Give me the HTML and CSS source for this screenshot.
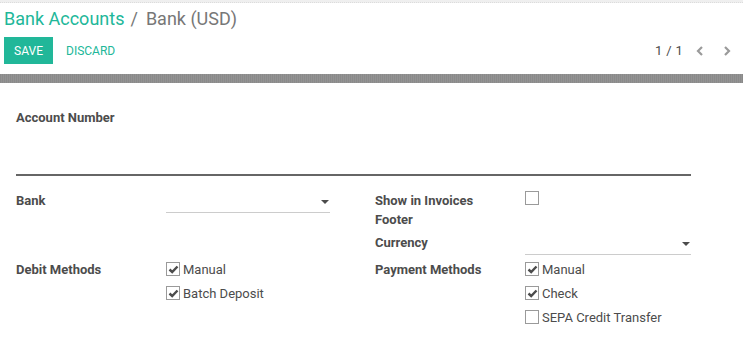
FILE: index.html
```html
<!DOCTYPE html>
<html>
<head>
<meta charset="utf-8">
<link rel="stylesheet" href="styles.css">
</head>
<body>
<div class="topstrip"></div>
<div class="control-panel">
  <div class="breadcrumb"><a class="crumb-link">Bank Accounts</a><span class="sep">/</span><span class="crumb-active">Bank (USD)</span></div>
  <div class="cp-bottom">
    <div class="buttons">
      <button class="btn-save">SAVE</button>
      <button class="btn-discard">DISCARD</button>
    </div>
    <div class="pager">
      <span class="pager-value">1 / 1</span>
      <svg class="chev chev-prev" width="10" height="12" viewBox="0 0 10 12"><path d="M7 2 L3 6 L7 10" fill="none" stroke="#9a9a9a" stroke-width="2.2"/></svg>
      <svg class="chev" width="10" height="12" viewBox="0 0 10 12"><path d="M3 2 L7 6 L3 10" fill="none" stroke="#9a9a9a" stroke-width="2.2"/></svg>
    </div>
  </div>
</div>
<div class="divider"></div>
<div class="sheet">
  <div class="title-label">Account Number</div>
  <div class="title-field"></div>
  <div class="group">
    <div class="label r1">Bank</div>
    <div class="select r1"><span class="caret"></span></div>
    <div class="label r1 c4">Show in Invoices<br>Footer</div>
    <div class="boxcell r1 c5"><span class="cb"></span></div>

    <div class="label r2 c4">Currency</div>
    <div class="select r2 c5"><span class="caret"></span></div>

    <div class="label r3">Debit Methods</div>
    <div class="checks r3">
      <div class="check"><span class="cb on"><svg width="11" height="9" viewBox="0 0 11 9"><path d="M1.5 4.5 L4.2 7 L9.5 1.5" fill="none" stroke="#4c4c4c" stroke-width="2.4"/></svg></span>Manual</div>
      <div class="check"><span class="cb on"><svg width="11" height="9" viewBox="0 0 11 9"><path d="M1.5 4.5 L4.2 7 L9.5 1.5" fill="none" stroke="#4c4c4c" stroke-width="2.4"/></svg></span>Batch Deposit</div>
    </div>
    <div class="label r3 c4">Payment Methods</div>
    <div class="checks r3 c5">
      <div class="check"><span class="cb on"><svg width="11" height="9" viewBox="0 0 11 9"><path d="M1.5 4.5 L4.2 7 L9.5 1.5" fill="none" stroke="#4c4c4c" stroke-width="2.4"/></svg></span>Manual</div>
      <div class="check"><span class="cb on"><svg width="11" height="9" viewBox="0 0 11 9"><path d="M1.5 4.5 L4.2 7 L9.5 1.5" fill="none" stroke="#4c4c4c" stroke-width="2.4"/></svg></span>Check</div>
      <div class="check"><span class="cb"></span>SEPA Credit Transfer</div>
    </div>
  </div>
</div>
</body>
</html>
```
FILE: styles.css
```css
* { box-sizing: border-box; }
body {
  margin: 0;
  font-family: Roboto, "Noto Sans", sans-serif;
  font-size: 13px;
  color: #4c4c4c;
  background: #fff;
  width: 743px;
  height: 358px;
  overflow: hidden;
}
.topstrip {
  height: 3px;
  background: #efefef;
  border-bottom: 1px dotted #dcdcdc;
}
.control-panel {
  padding: 4px 0 0 4px;
  height: 71px;
}
.breadcrumb {
  font-size: 18px;
  line-height: 24px;
  height: 26px;
}
.crumb-link { color: #21b799; }
.sep { color: #777; margin: 0 8px 0 6px; }
.crumb-active { color: #777; }
.cp-bottom {
  display: flex;
  justify-content: space-between;
  align-items: center;
  margin-top: 4px;
}
.buttons { display: flex; align-items: center; }
.btn-save {
  font-family: Roboto, sans-serif;
  font-size: 12px;
  background: #21b799;
  color: #fff;
  border: none;
  height: 27px;
  width: 49px;
  padding: 0;
}
.btn-discard {
  font-family: Roboto, sans-serif;
  font-size: 12px;
  background: none;
  border: none;
  color: #21b799;
  margin-left: 8px;
  padding: 0 5px;
  height: 27px;
}
.pager {
  display: flex;
  align-items: center;
  padding-right: 11px;
}
.pager-value { letter-spacing: 0.3px; }
.chev { display: block; }
.chev-prev { margin: 0 17px 0 12px; }
.divider {
  height: 9px;
  background: repeating-linear-gradient(90deg, #8a8a8a 0 1px, #939393 1px 2px);
}
.sheet {
  padding: 26px 0 0 16px;
  width: 691px;
}
.title-label {
  font-weight: bold;
  line-height: 18px;
}
.title-field {
  height: 49px;
  border-bottom: 2px solid #666;
}
.group {
  display: grid;
  grid-template-columns: 150px 164px 45px 150px 166px;
  grid-template-rows: auto auto auto;
  margin-top: 15px;
}
.label {
  font-weight: bold;
  line-height: 19px;
  grid-column: 1;
}
.r1 { grid-row: 1; }
.r2 { grid-row: 2; margin-top: 4px; }
.r3 { grid-row: 3; margin-top: 5px; }
.select {
  grid-column: 2;
  height: 22px;
  border-bottom: 1px solid #ccc;
  position: relative;
}
.caret {
  position: absolute;
  right: 1px;
  top: 9px;
  width: 0;
  height: 0;
  border-left: 4px solid transparent;
  border-right: 4px solid transparent;
  border-top: 4px solid #4c4c4c;
}
.boxcell { padding-top: 0; }
.cb {
  display: inline-flex;
  align-items: center;
  justify-content: center;
  width: 14px;
  height: 14px;
  border: 1px solid #9a9a9a;
  background: #fff;
  vertical-align: middle;
}
.boxcell .cb { display: flex; }
.checks { grid-column: 2; }
.check {
  display: flex;
  align-items: center;
  height: 24px;
  margin-top: -3px;
}
.check + .check { margin-top: 0; }
.check .cb { margin-right: 3px; }
.group .c4 { grid-column: 4; }
.group .c5 { grid-column: 5; }
```
